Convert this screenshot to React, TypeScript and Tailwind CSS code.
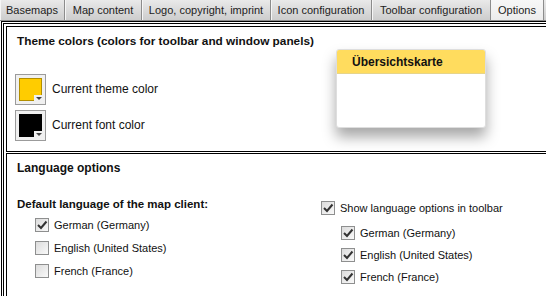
import React from "react";

const tabs = [
  { label: "Basemaps", w: "w-[65px]" },
  { label: "Map content", w: "w-[77px]" },
  { label: "Logo, copyright, imprint", w: "w-[129px]" },
  { label: "Icon configuration", w: "w-[101px]" },
  { label: "Toolbar configuration", w: "w-[119px]" },
];

function Check({ checked }: { checked: boolean }) {
  return (
    <span className="relative inline-block h-[14px] w-[14px] shrink-0 border border-[#8e8f8f] bg-gradient-to-br from-[#dcdcdc] to-[#f9f9f9]">
      {checked && (
        <svg viewBox="0 0 14 14" className="absolute -left-px -top-px h-[14px] w-[14px]">
          <path d="M3 7 L6 10 L11.5 3.5" fill="none" stroke="#333" strokeWidth="2" />
        </svg>
      )}
    </span>
  );
}

function Swatch({ color, edge }: { color: string; edge: string }) {
  return (
    <div className="relative h-[31px] w-[31px] border border-[#9b9b9b] bg-[#f0f0f0] p-[3px]">
      <div className={`h-full w-full border ${edge} ${color}`} />
      <div className="absolute bottom-[2px] right-[2px] flex h-[7px] w-[9px] items-center justify-center bg-[#f0f0f0]">
        <svg viewBox="0 0 6 3" className="h-[3px] w-[6px]">
          <path d="M0 0 H6 L3 3 Z" fill="#444" />
        </svg>
      </div>
    </div>
  );
}

export default function App() {
  return (
    <div className="h-[296px] w-[546px] overflow-hidden bg-white font-['Liberation_Sans',Arial,sans-serif] text-[#111]">
      <div className="w-[580px]">
        <div className="flex h-[21px] border-b border-[#8c8c8c]">
          {tabs.map((t) => (
            <div
              key={t.label}
              className={`${t.w} flex items-center justify-center border-r border-[#8c8c8c] bg-gradient-to-b from-[#e9e9e9] to-[#cdcdcd] text-[11px] text-[#222] shadow-[inset_1px_0_0_#f6f6f6]`}
            >
              {t.label}
            </div>
          ))}
          <div className="flex w-[53px] items-center justify-center border-r border-[#8c8c8c] bg-gradient-to-b from-[#f7f7f7] to-[#ececec] pt-px text-[11px] text-[#222]">
            Options
          </div>
          <div className="flex-1 bg-gradient-to-b from-[#e9e9e9] to-[#cdcdcd]" />
        </div>

        <div className="ml-px border-l-[3px] border-t-[3px] border-double border-black pl-[2px] pt-[2px]">
          <div className="relative h-[126px] border-b border-l border-t border-black pl-[10px] pt-[7px]">
            <div className="text-[11.8px] font-bold leading-[14px]">
              Theme colors (colors for toolbar and window panels)
            </div>
            <div className="mt-[26px] flex flex-col gap-[5px]">
              <div className="-ml-[2px] flex items-center gap-[6px]">
                <Swatch color="bg-[#ffcc00]" edge="border-[#b38f00]" />
                <span className="-mt-[2px] text-[12px]">Current theme color</span>
              </div>
              <div className="-ml-[2px] flex items-center gap-[6px]">
                <Swatch color="bg-black" edge="border-black" />
                <span className="-mt-[2px] text-[12px]">Current font color</span>
              </div>
            </div>

            <div className="absolute left-[329px] top-[22px] h-[79px] w-[150px] overflow-hidden rounded-[3px] border border-[#dedede] bg-white shadow-[0_9px_14px_rgba(0,0,0,0.35)]">
              <div className="flex h-[24px] items-center border-b border-[#e6d48a] bg-[#ffdc5e] pl-[15px] text-[12px] font-bold">
                Übersichtskarte
              </div>
            </div>
          </div>

          <div className="mt-px h-[150px] border-l border-t border-black pl-[10px] pt-[7px]">
            <div className="text-[12px] font-bold leading-[14px]">Language options</div>
            <div className="mt-[22px] flex">
              <div className="w-[304px]">
                <div className="text-[11.5px] font-bold leading-[14px]">Default language of the map client:</div>
                <div className="mt-[7px] flex flex-col gap-[9px] pl-[18px] text-[11px]">
                  <label className="flex h-[14px] items-center gap-[5px]">
                    <Check checked />
                    German (Germany)
                  </label>
                  <label className="flex h-[14px] items-center gap-[5px]">
                    <Check checked={false} />
                    English (United States)
                  </label>
                  <label className="flex h-[14px] items-center gap-[5px]">
                    <Check checked={false} />
                    French (France)
                  </label>
                </div>
              </div>
              <div className="pt-[4px] text-[11px]">
                <label className="flex h-[14px] items-center gap-[5px]">
                  <Check checked />
                  Show language options in toolbar
                </label>
                <div className="mt-[11px] flex flex-col gap-[8px] pl-[20px]">
                  <label className="flex h-[14px] items-center gap-[5px]">
                    <Check checked />
                    German (Germany)
                  </label>
                  <label className="flex h-[14px] items-center gap-[5px]">
                    <Check checked />
                    English (United States)
                  </label>
                  <label className="flex h-[14px] items-center gap-[5px]">
                    <Check checked />
                    French (France)
                  </label>
                </div>
              </div>
            </div>
          </div>
        </div>
      </div>
    </div>
  );
}
